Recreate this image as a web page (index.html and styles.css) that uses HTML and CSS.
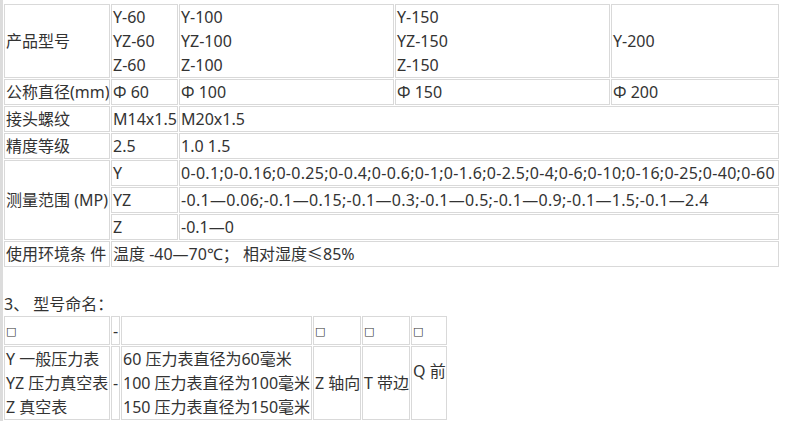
FILE: index.html
```html
<!DOCTYPE html>
<html lang="zh-CN">
<head>
<meta charset="utf-8">
<title>压力表</title>
<link rel="stylesheet" href="styles.css">
</head>
<body>
<div class="page">
<table class="spec">
  <colgroup>
    <col class="w106"><col class="w67"><col class="w215"><col class="w215"><col class="w168">
  </colgroup>
  <tr class="tall">
    <td>产品型号</td>
    <td>Y-60<br>YZ-60<br>Z-60</td>
    <td>Y-100<br>YZ-100<br>Z-100</td>
    <td>Y-150<br>YZ-150<br>Z-150</td>
    <td>Y-200</td>
  </tr>
  <tr>
    <td>公称直径(mm)</td>
    <td>Φ 60</td>
    <td>Φ 100</td>
    <td>Φ 150</td>
    <td>Φ 200</td>
  </tr>
  <tr>
    <td>接头螺纹</td>
    <td>M14x1.5</td>
    <td colspan="3">M20x1.5</td>
  </tr>
  <tr>
    <td>精度等级</td>
    <td>2.5</td>
    <td colspan="3">1.0 1.5</td>
  </tr>
  <tr>
    <td rowspan="3">测量范围 (MP)</td>
    <td>Y</td>
    <td colspan="3" class="long">0-0.1;0-0.16;0-0.25;0-0.4;0-0.6;0-1;0-1.6;0-2.5;0-4;0-6;0-10;0-16;0-25;0-40;0-60</td>
  </tr>
  <tr>
    <td>YZ</td>
    <td colspan="3" class="long">-0.1—0.06;-0.1—0.15;-0.1—0.3;-0.1—0.5;-0.1—0.9;-0.1—1.5;-0.1—2.4</td>
  </tr>
  <tr>
    <td>Z</td>
    <td colspan="3">-0.1—0</td>
  </tr>
  <tr>
    <td>使用环境条 件</td>
    <td colspan="4">温度 -40—70℃； 相对湿度≤85%</td>
  </tr>
</table>
<p class="blank">&nbsp;</p>
<p class="heading">3、 型号命名：</p>
<table class="naming">
  <colgroup>
    <col class="w106"><col class="w9"><col class="w191"><col class="w48"><col class="w48"><col class="w36">
  </colgroup>
  <tr>
    <td><span class="box">□</span></td>
    <td>-</td>
    <td></td>
    <td><span class="box">□</span></td>
    <td><span class="box">□</span></td>
    <td><span class="box">□</span></td>
  </tr>
  <tr class="tall">
    <td>Y 一般压力表<br>YZ 压力真空表<br>Z 真空表</td>
    <td>-</td>
    <td>60 压力表直径为60毫米<br>100 压力表直径为100毫米<br>150 压力表直径为150毫米</td>
    <td>Z 轴向</td>
    <td>T 带边</td>
    <td>Q 前<br>&nbsp;</td>
  </tr>
</table>
</div>
</body>
</html>
```

FILE: styles.css
```css
html, body {
  margin: 0;
  padding: 0;
  background: #ffffff;
}

body {
  font-family: "Noto Sans", "Noto Sans CJK SC", sans-serif;
  font-size: 16px;
  line-height: 24px;
  color: #333333;
}

.page {
  min-height: 421px;
  box-sizing: border-box;
  border-left: 3px solid #dcdcdc;
  padding: 4px 0 0 1px;
}

table {
  border-collapse: separate;
  border-spacing: 1px;
  table-layout: fixed;
  margin: -1px 0 0 -1px;
}

.spec {
  width: 777px;
}

.naming {
  width: 445px;
}

td {
  border: 1px solid #d9d9d9;
  padding: 0 0 0 1px;
  vertical-align: middle;
  white-space: nowrap;
  overflow: hidden;
}

.w106 { width: 106px; }
.w67 { width: 67px; }
.w215 { width: 215px; }
.w168 { width: 168px; }
.w9 { width: 9px; }
.w191 { width: 191px; }
.w48 { width: 48px; }
.w36 { width: 36px; }

.long {
  letter-spacing: 0.3px;
}

.blank,
.heading {
  margin: 0;
  height: 24px;
}

.box {
  font-family: "DejaVu Sans", sans-serif;
  font-size: 11px;
}
```
